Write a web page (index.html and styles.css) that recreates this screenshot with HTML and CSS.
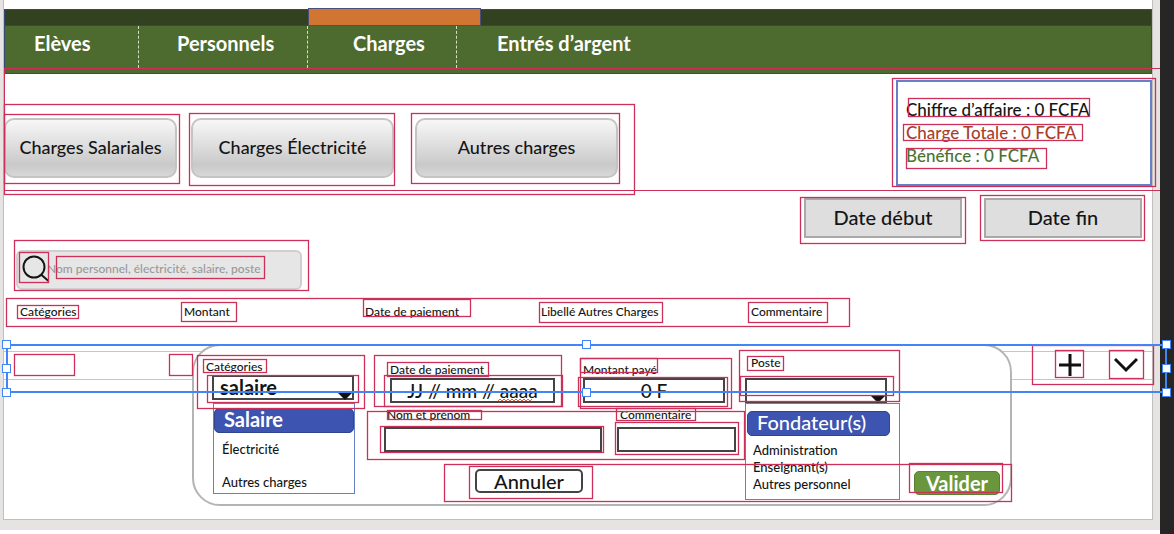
FILE: index.html
```html
<!DOCTYPE html>
<html lang="fr">
<head>
<meta charset="utf-8">
<title>Charges</title>
<link rel="stylesheet" href="styles.css">
</head>
<body>
<div class="workspace">
  <div class="stage">
    <div class="page">
      <header class="header">
        <div class="strip"></div>
        <nav class="tabs">
          <a class="tab" href="#eleves">Elèves</a>
          <a class="tab" href="#personnels">Personnels</a>
          <a class="tab tab-active" href="#charges">Charges</a>
          <a class="tab" href="#entrees">Entrés d’argent</a>
        </nav>
      </header>

      <section class="overview">
        <div class="charge-types">
          <button class="type-button" type="button">Charges Salariales</button>
          <button class="type-button" type="button">Charges Électricité</button>
          <button class="type-button" type="button">Autres charges</button>
        </div>
        <div class="summary">
          <p class="summary-line">Chiffre d’affaire : 0 FCFA</p>
          <p class="summary-line expense">Charge Totale : 0 FCFA</p>
          <p class="summary-line profit">Bénéfice : 0 FCFA</p>
        </div>
      </section>

      <div class="dates">
        <button class="date-button" type="button">Date début</button>
        <button class="date-button" type="button">Date fin</button>
      </div>

      <label class="search">
        <svg class="search-icon" viewBox="0 0 28 28" aria-hidden="true"><circle cx="12" cy="12" r="10.5"/><path d="M19 19.5 26.500 26"/></svg>
        <input class="search-input" type="text" aria-label="Recherche" placeholder="Nom personnel, électricité, salaire, poste">
      </label>

      <table class="charges">
        <thead>
          <tr>
            <th class="col-category">Catégories</th>
            <th class="col-amount">Montant</th>
            <th class="col-date">Date de paiement</th>
            <th class="col-label">Libellé Autres Charges</th>
            <th>Commentaire</th>
            <th class="col-actions"></th>
          </tr>
        </thead>
        <tbody>
          <tr>
            <td></td><td></td><td></td><td></td><td></td>
            <td>
              <div class="row-actions">
                <button class="icon-button" type="button" aria-label="Ajouter"><svg viewBox="0 0 24 24"><path d="M12 1v22M1 12h22"/></svg></button>
                <button class="icon-button" type="button" aria-label="Ouvrir"><svg viewBox="0 0 24 24"><path d="M1 6l11 11L23 6"/></svg></button>
              </div>
            </td>
          </tr>
        </tbody>
      </table>

      <form class="editor">
        <div class="column">
          <label class="label" for="category">Catégories</label>
          <div class="select-box category-box">
            <select class="control select" id="category"><option>salaire</option></select>
            <svg class="arrow" viewBox="0 0 16 8" aria-hidden="true"><path d="M0 0h16L8 8z"/></svg>
          </div>
          <ul class="options category-options">
            <li class="option option-active">Salaire</li>
            <li class="option">Électricité</li>
            <li class="option">Autres charges</li>
          </ul>
        </div>

        <div class="column middle">
          <div class="fields first-fields">
            <div class="field">
              <label class="label" for="date">Date de paiement</label>
              <input class="control date-input" id="date" type="text" value="JJ // mm // aaaa">
              <svg class="squiggle" viewBox="0 0 37 4" aria-hidden="true"><path d="M0 3l2-2 2 2 2-2 2 2 2-2 2 2 2-2 2 2 2-2 2 2 2-2 2 2 2-2 2 2 2-2 2 2 2-2"/></svg>
            </div>
            <div class="field">
              <label class="label" for="amount">Montant payé</label>
              <input class="control amount-input" id="amount" type="text" value="0 F">
            </div>
          </div>
          <div class="fields second-fields">
            <div class="field">
              <label class="label" for="name">Nom et prénom</label>
              <input class="control name-input" id="name" type="text">
            </div>
            <div class="field">
              <label class="label" for="comment">Commentaire</label>
              <input class="control comment-input" id="comment" type="text">
            </div>
          </div>
          <button class="cancel" type="button">Annuler</button>
        </div>

        <div class="column">
          <label class="label post-label" for="post">Poste</label>
          <div class="select-box post-box">
            <select class="control select" id="post"><option></option></select>
            <svg class="arrow" viewBox="0 0 16 8" aria-hidden="true"><path d="M0 0h16L8 8z"/></svg>
          </div>
          <ul class="options post-options">
            <li class="option option-active">Fondateur(s)</li>
            <li class="option">Administration</li>
            <li class="option">Enseignant(s)</li>
            <li class="option">Autres personnel</li>
          </ul>
        </div>

        <button class="submit" type="submit">Valider</button>
      </form>
    </div>
  </div>
  <div class="rail"></div>

  <svg class="frames" aria-hidden="true">
    <g class="frame" transform="translate(-.5 -.5)">
      <rect x="5" y="105" width="630" height="90"/>
      <rect x="5" y="115" width="175" height="69"/>
      <rect x="190" y="114" width="205" height="72"/>
      <rect x="412" y="114" width="208" height="70"/>
      <rect x="15" y="241" width="294" height="50"/>
      <rect x="20" y="253" width="29" height="30"/>
      <rect x="57" y="257" width="208" height="22"/>
      <rect x="7" y="299" width="843" height="28"/>
      <rect x="18" y="306" width="61" height="13"/>
      <rect x="182" y="303" width="55" height="19"/>
      <rect x="364" y="300" width="107" height="17"/>
      <rect x="540" y="303" width="123" height="20"/>
      <rect x="749" y="303" width="79" height="20"/>
      <rect x="15" y="355" width="60" height="21"/>
      <rect x="170" y="355" width="23" height="21"/>
      <rect x="198" y="356" width="167" height="53"/>
      <rect x="204" y="360" width="63" height="13"/>
      <rect x="208" y="376" width="151" height="27"/>
      <rect x="375" y="356" width="187" height="51"/>
      <rect x="388" y="363" width="101" height="14"/>
      <rect x="385" y="376" width="178" height="31"/>
      <rect x="368" y="412" width="377" height="48"/>
      <rect x="388" y="411" width="94" height="9"/>
      <rect x="381" y="427" width="223" height="26"/>
      <rect x="581" y="359" width="77" height="14"/>
      <rect x="581" y="359" width="151" height="50"/>
      <rect x="579" y="378" width="149" height="29"/>
      <rect x="617" y="409" width="79" height="12"/>
      <rect x="616" y="423" width="123" height="32"/>
      <rect x="740" y="351" width="160" height="51"/>
      <rect x="748" y="357" width="36" height="14"/>
      <rect x="741" y="377" width="153" height="19"/>
      <rect x="445" y="465" width="567" height="37"/>
      <rect x="470" y="467" width="123" height="32"/>
      <rect x="910" y="464" width="93" height="29"/>
    </g>
    <svg class="from-right" x="100%">
      <g class="frame" transform="translate(-.5 -.5)">
        <rect x="-281" y="79" width="263" height="108"/>
        <rect x="-265" y="99" width="181" height="18"/>
        <rect x="-270" y="125" width="179" height="16"/>
        <rect x="-267" y="149" width="140" height="20"/>
        <rect x="-373" y="198" width="165" height="46"/>
        <rect x="-193" y="196" width="164" height="45"/>
        <rect x="-141" y="346" width="121" height="39"/>
        <rect x="-118" y="351" width="28" height="27"/>
        <rect x="-64" y="351" width="34" height="28"/>
      </g>
    </svg>
  </svg>
  <div class="guides"></div>
  <div class="selection">
    <i class="handle"></i><i class="handle"></i><i class="handle"></i>
    <i class="handle"></i><i></i><i class="handle"></i>
    <i class="handle"></i><i class="handle"></i><i class="handle"></i>
  </div>
</div>
</body>
</html>
```
FILE: styles.css
```css
* { box-sizing: border-box; }
body { margin: 0; font-family: Lato, "Open Sans", sans-serif; font-weight: 500; color: #151515; background: #fff; }
button, input, select { font: inherit; color: inherit; }
p, ul { margin: 0; padding: 0; }

.workspace { position: relative; display: flex; min-height: 100vh; }
.stage { flex: 1; align-self: flex-start; padding: 0 7px 10px 3px; background: #e6e4e2; }
.page { padding: 9px 0 13px; background: #fff; border: solid #bfbfbf; border-width: 0 1px 1px; }
.rail { width: 14px; background: #262626; }

.header { border: 1px solid #34487a; }
.strip { height: 16px; background: #324220; border-bottom: 1px solid #2f4568; }
.tabs { display: grid; grid-template-columns: 134px 169px 149px 1fr; height: 47px; padding-bottom: 5px; background: #4d6b2e; }
.tab { position: relative; padding-left: 38px; border-right: 1px dashed #d5dfc9; color: #fff; font-size: 20px; font-weight: 700; line-height: 34px; text-decoration: none; }
.tab:first-child { padding-left: 29px; }
.tab-active { padding-left: 45px; }
.tab:last-child { padding-left: 40px; border-right: 0; }
.tab-active::before { content: ""; position: absolute; left: 0; top: -18px; width: 171px; height: 16px; background: #d07632; border: 1px solid #4a4e78; }

.overview { display: flex; justify-content: space-between; padding-top: 6px; }
.charge-types { display: grid; grid-template-columns: 187px 224px 203px; padding-top: 38px; align-items: start; }
.type-button { height: 60px; width: 203px; padding: 0 0 2px; border: 2px solid #c4c4c4; border-radius: 10px; background: linear-gradient(#f7f7f7, #dedede 45%, #c9c9c9 80%, #d8d8d8); font-size: 18px; }
.type-button:first-child { width: 173px; }
.summary { width: 256px; height: 106px; padding: 16px 0 0 8px; border: 2px solid #6680c8; }
.summary-line { font-size: 17px; line-height: 23px; }
.expense { color: #a8402c; }
.profit { color: #4b7332; }

.dates { display: flex; justify-content: flex-end; gap: 22px; padding: 12px 10px 0 0; }
.date-button { width: 158px; height: 40px; padding: 0 0 2px; border: 2px solid #a9a9a9; background: #dedede; font-size: 20px; }

.search { display: flex; align-items: center; width: 286px; height: 40px; margin: 12px 0 0 12px; padding: 0 0 3px 4px; border: 2px solid #cfcfcf; border-radius: 6px; background: #e6e6e6; }
.search-icon { flex: none; width: 28px; height: 28px; margin-right: -3px; fill: none; stroke: #151515; stroke-width: 2; }
.search-input { flex: 1; min-width: 0; padding: 0; border: 0; outline: 0; background: none; font-size: 12px; }
.search-input::placeholder { color: #999; }

.charges { width: 100%; margin-top: 8px; border-collapse: collapse; table-layout: fixed; font-size: 12px; }
.charges th { height: 53px; padding: 6px 0 0 16px; vertical-align: top; text-align: left; font-weight: 500; line-height: 16px; }
.charges td { height: 28px; padding: 0; border: solid #c6c6c6; border-width: 1px 0; }
.col-category { width: 164px; }
.col-amount { width: 181px; }
.col-date { width: 176px; }
.col-label { width: 210px; }
.col-actions { width: 121px; }
.row-actions { display: flex; justify-content: flex-end; gap: 32px; padding-right: 14px; }
.icon-button { width: 24px; height: 24px; padding: 0; border: 0; background: none; }
.icon-button svg { display: block; width: 24px; height: 24px; fill: none; stroke: #111; stroke-width: 3; }

.editor { position: relative; display: flex; width: 820px; margin: -36px 0 0 188px; padding: 8px 0 4px 12px; border: 2px solid #b4b4b4; border-radius: 28px; background: #fff; }
.column { display: flex; flex-direction: column; align-items: flex-start; }
.label { font-size: 12px; line-height: 16px; }
.control { display: block; width: 100%; height: 25px; padding: 0; border: 2px solid #444; border-radius: 0; outline: 0; background: #fff; font-size: 19px; line-height: 21px; text-align: center; }
.select { appearance: none; padding-left: 6px; text-align: left; font-size: 20px; font-weight: 700; }
.select-box { position: relative; width: 142px; }
.category-box { margin-left: 6px; }
.arrow { position: absolute; right: 1px; bottom: 0; width: 16px; height: 8px; fill: #111; }
.column > .label { margin-top: 5px; }
.options { list-style: none; border: 1px solid #6680c8; font-size: 13px; }
.category-options { width: 142px; height: 91px; margin: 3px 0 0 7px; padding-top: 4px; }
.option { padding-left: 8px; line-height: 33px; }
.option-active { padding: 0 0 2px 9px; border: 1px solid #2f4590; border-radius: 5px; background: #3d54b0; color: #fff; font-size: 20px; line-height: 21px; font-weight: 700; }

.middle { width: 361px; margin-left: 29px; padding-top: 8px; }
.fields { display: flex; align-items: flex-start; }
.field { position: relative; }
.first-fields { gap: 28px; padding-left: 6px; }
.second-fields { gap: 15px; padding-top: 4px; }
.second-fields .label { padding-left: 3px; }
.second-fields .control { margin-top: 4px; }
.field .label { display: block; }
.date-input { width: 165px; }
.amount-input { width: 142px; }
.name-input { width: 218px; }
.comment-input { width: 119px; }
.squiggle { position: absolute; left: 108px; bottom: 1px; width: 37px; height: 4px; fill: none; stroke: #e4604f; }
.cancel { width: 108px; height: 24px; margin: 17px 0 0 91px; padding: 0; border: 2px solid #444; border-radius: 5px; background: #fff; font-size: 20px; line-height: 20px; }

.column > .post-label { margin: 1px 0 7px 6px; }
.options.post-options { width: 155px; height: 97px; padding: 7px 9px 0 1px; }
.post-options .option { padding-left: 6px; line-height: 17px; }
.post-options .option-active { margin-bottom: 6px; padding-left: 9px; line-height: 21px; font-weight: 500; }
.submit { align-self: flex-end; width: 86px; height: 24px; margin: 0 0 5px 14px; padding: 0; border: 1px solid #55822c; border-radius: 5px; background: #6a973d; color: #fff; font-size: 20px; font-weight: 700; line-height: 20px; }

.frames, .guides, .selection { position: absolute; pointer-events: none; }
.frames { inset: 0; width: 100%; height: 100%; }
.frame { fill: none; stroke: #cc3058; stroke-width: 1.3; }
.from-right { overflow: visible; }
.guides { left: 4px; right: 14px; top: 68px; height: 123px; border: 1px solid #cc3058; border-right: 0; }
.selection { left: 2px; right: 3px; top: 340px; display: grid; grid-template-columns: repeat(3, 9px); justify-content: space-between; align-content: space-between; height: 57px; }
.selection::before { content: ""; position: absolute; inset: 4px; border: 2px solid #4285f4; }
.handle { position: relative; width: 9px; height: 9px; border: 1px solid #4285f4; background: #fff; }
```
